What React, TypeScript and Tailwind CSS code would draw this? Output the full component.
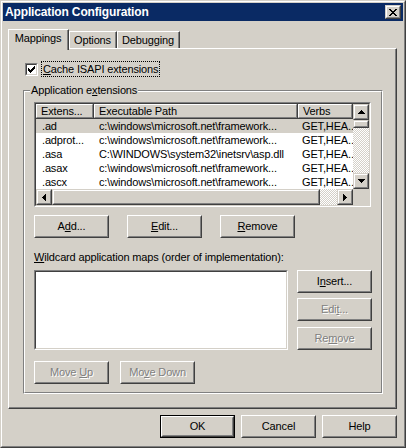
import React from "react";

type BoxProps = { children?: React.ReactNode; className?: string };

// classic raised 3d edge; `face` = scrollbar/caption style (outer light edge is the face colour)
function Bevel({ children, className = "", face = false }: BoxProps & { face?: boolean }) {
  return (
    <div
      className={`border ${
        face ? "border-t-[#d4d0c8] border-l-[#d4d0c8]" : "border-t-white border-l-white"
      } border-r-[#404040] border-b-[#404040] bg-[#d4d0c8] ${className}`}
    >
      <div
        className={`flex h-full w-full items-center justify-center border ${
          face ? "border-t-white border-l-white" : "border-t-[#d4d0c8] border-l-[#d4d0c8]"
        } border-r-[#808080] border-b-[#808080]`}
      >
        {children}
      </div>
    </div>
  );
}

function Sunken({ children, className = "" }: BoxProps) {
  return (
    <div className={`border border-t-[#808080] border-l-[#808080] border-r-white border-b-white ${className}`}>
      <div className="h-full w-full overflow-hidden border border-t-[#404040] border-l-[#404040] border-r-[#d4d0c8] border-b-[#d4d0c8] bg-white">
        {children}
      </div>
    </div>
  );
}

function Button({
  children,
  disabled = false,
  primary = false,
}: {
  children: React.ReactNode;
  disabled?: boolean;
  primary?: boolean;
}) {
  const text = disabled ? "text-[#808080] [text-shadow:1px_1px_0_#ffffff]" : "text-black";
  if (primary) {
    return (
      <div className="h-[23px] w-[75px] border border-black">
        <Bevel className="h-full w-full">
          <span className={text}>{children}</span>
        </Bevel>
      </div>
    );
  }
  return (
    <Bevel className="h-[23px] w-[75px]">
      <span className={text}>{children}</span>
    </Bevel>
  );
}

const ARROWS = {
  up: { w: 7, h: 4, d: "M3 0h1v1h1v1h1v1h1v1H0V3h1V2h1V1h1z" },
  down: { w: 7, h: 4, d: "M0 0h7v1H6v1H5v1H4v1H3V3H2V2H1V1H0z" },
  left: { w: 4, h: 7, d: "M4 0v7H3V6H2V5H1V4H0V3h1V2h1V1h1V0z" },
  right: { w: 4, h: 7, d: "M0 0h1v1h1v1h1v1h1v1H3v1H2v1H1v1H0z" },
};

function ArrowButton({ dir }: { dir: keyof typeof ARROWS }) {
  const a = ARROWS[dir];
  return (
    <Bevel face className="h-[16px] w-[16px] shrink-0">
      <svg width={a.w} height={a.h} viewBox={`0 0 ${a.w} ${a.h}`} shapeRendering="crispEdges">
        <path d={a.d} fill="#000" />
      </svg>
    </Bevel>
  );
}

const TRACK =
  "bg-[image:repeating-conic-gradient(#ffffff_0%_25%,#d4d0c8_0%_50%)] bg-size-[2px_2px] bg-[length:2px_2px]";

const ROWS = [
  { ext: ".ad", path: "c:\\windows\\microsoft.net\\framework...", selected: true },
  { ext: ".adprot...", path: "c:\\windows\\microsoft.net\\framework...", selected: false },
  { ext: ".asa", path: "C:\\WINDOWS\\system32\\inetsrv\\asp.dll", selected: false },
  { ext: ".asax", path: "c:\\windows\\microsoft.net\\framework...", selected: false },
  { ext: ".ascx", path: "c:\\windows\\microsoft.net\\framework...", selected: false },
];

function HeaderCell({ label, width }: { label: string; width: string }) {
  return (
    <div className={`h-full shrink-0 border-r border-b border-r-[#404040] border-b-[#404040] ${width}`}>
      <div className="flex h-full items-center overflow-hidden whitespace-nowrap border border-t-white border-l-white border-r-[#808080] border-b-[#808080] bg-[#d4d0c8] pl-[4px]">
        {label}
      </div>
    </div>
  );
}

function ExtensionList() {
  return (
    <Sunken className="h-[105px] w-[337px]">
      <div className="flex h-full">
        <div className="flex w-[317px] flex-col overflow-hidden">
          <div className="flex h-[15px]">
            <HeaderCell label="Extens..." width="w-[58px]" />
            <HeaderCell label="Executable Path" width="w-[204px]" />
            <HeaderCell label="Verbs" width="w-[55px]" />
          </div>
          {ROWS.map((r) => (
            <div
              key={r.ext}
              className={`flex h-[14px] items-center whitespace-nowrap ${r.selected ? "bg-[#d4d0c8]" : ""}`}
            >
              <div className="w-[58px] shrink-0 overflow-hidden pl-[6px]">{r.ext}</div>
              <div className="w-[204px] shrink-0 overflow-hidden pl-[5px]">{r.path}</div>
              <div className="w-[55px] shrink-0 pl-[4px]">GET,HEA..</div>
            </div>
          ))}
          <div className="mt-auto flex h-[16px]">
            <ArrowButton dir="left" />
            <Bevel face className="h-[16px] w-[268px]" />
            <div className={`h-[16px] flex-1 ${TRACK}`} />
            <ArrowButton dir="right" />
          </div>
        </div>
        <div className="flex w-[16px] flex-col">
          <ArrowButton dir="up" />
          <Bevel face className="h-[8px] w-[16px]" />
          <div className={`flex-1 ${TRACK}`} />
          <ArrowButton dir="down" />
          <div className="h-[16px] bg-[#d4d0c8]" />
        </div>
      </div>
    </Sunken>
  );
}

export default function App() {
  return (
    <div className="h-[448px] w-[406px] border border-t-[#d4d0c8] border-l-[#d4d0c8] border-r-[#404040] border-b-[#404040] bg-[#d4d0c8] font-['Liberation_Sans',Arial,sans-serif] text-[11px] leading-[13px] tracking-[-0.15px] text-black">
      <div className="h-full border border-t-white border-l-white border-r-[#808080] border-b-[#808080] p-px">
        {/* caption */}
        <div className="flex h-[18px] items-center justify-between bg-[#0a2a64] pl-[2px] pr-[2px]">
          <span className="text-[12px] font-bold text-white">Application Configuration</span>
          <Bevel face className="h-[14px] w-[16px]">
            <svg width="8" height="7" viewBox="0 0 8 7" shapeRendering="crispEdges">
              <path
                d="M0 0h2v1H0zM6 0h2v1H6zM1 1h2v1H1zM5 1h2v1H5zM2 2h4v1H2zM3 3h2v1H3zM2 4h4v1H2zM1 5h2v1H1zM5 5h2v1H5zM0 6h2v1H0zM6 6h2v1H6z"
                fill="#000"
              />
            </svg>
          </Bevel>
        </div>

        <div className="ml-[5px] mt-[8px] w-[389px]">
          {/* tabs */}
          <div className="relative z-10 flex h-[19px] items-end">
            <div className="-mb-[2px] h-[21px] w-[61px] border-t border-l border-r border-t-white border-l-white border-r-[#404040] bg-[#d4d0c8]">
              <div className="flex h-full justify-center border-r border-r-[#808080] pt-[2px]">Mappings</div>
            </div>
            <div className="h-[17px] w-[48px] border-t border-l border-r border-t-white border-l-white border-r-[#404040]">
              <div className="flex h-full justify-center border-r border-r-[#808080] pt-[2px]">Options</div>
            </div>
            <div className="h-[17px] w-[63px] border-t border-l border-r border-t-white border-l-white border-r-[#404040]">
              <div className="flex h-full justify-center border-r border-r-[#808080] pt-[2px]">Debugging</div>
            </div>
          </div>

          {/* tab page */}
          <div className="h-[361px] border border-t-white border-l-white border-r-[#404040] border-b-[#404040]">
            <div className="h-full border-r border-b border-r-[#808080] border-b-[#808080] pt-[12px]">
              <div className="ml-[16px] flex h-[16px] items-center">
                <div className="h-[13px] w-[13px] border border-t-[#808080] border-l-[#808080] border-r-white border-b-white">
                  <div className="flex h-full w-full items-center justify-center border border-t-[#404040] border-l-[#404040] border-r-[#d4d0c8] border-b-[#d4d0c8] bg-white">
                    <svg width="7" height="7" viewBox="0 0 7 7" shapeRendering="crispEdges">
                      <path
                        d="M6 0h1v1H6zM5 1h2v1H5zM0 2h1v1H0zM4 2h3v1H4zM0 3h2v1H0zM3 3h3v1H3zM0 4h5v1H0zM1 5h3v1H1zM2 6h1v1H2z"
                        fill="#000"
                      />
                    </svg>
                  </div>
                </div>
                <div className="ml-[3px] flex h-[16px] items-center border border-dotted border-black px-[1px]">
                  <span>
                    <u>C</u>ache ISAPI extensions
                  </span>
                </div>
              </div>

              {/* group box */}
              <div className="relative ml-[14px] mt-[13px] h-[304px] w-[360px] border border-t-[#808080] border-l-[#808080] border-r-white border-b-white">
                <span className="absolute left-[6px] top-[-7px] bg-[#d4d0c8] px-[1px]">
                  Application e<u>x</u>tensions
                </span>
                <div className="h-full border border-t-white border-l-white border-r-[#808080] border-b-[#808080] pl-[9px] pt-[10px]">
                  <ExtensionList />

                  <div className="mt-[8px] flex gap-[18px]">
                    <Button>
                      A<u>d</u>d...
                    </Button>
                    <Button>
                      <u>E</u>dit...
                    </Button>
                    <Button>
                      <u>R</u>emove
                    </Button>
                  </div>

                  <div className="mt-[13px]">
                    <u>W</u>ildcard application maps (order of implementation):
                  </div>

                  <div className="mt-[6px] flex gap-[9px]">
                    <Sunken className="h-[80px] w-[254px]" />
                    <div className="flex flex-col">
                      <Button>
                        I<u>n</u>sert...
                      </Button>
                      <div className="mt-[5px]">
                        <Button disabled>
                          Edi<u>t</u>...
                        </Button>
                      </div>
                      <div className="mt-[6px]">
                        <Button disabled>
                          Re<u>m</u>ove
                        </Button>
                      </div>
                    </div>
                  </div>

                  <div className="mt-[11px] flex gap-[11px]">
                    <Button disabled>
                      Move <u>U</u>p
                    </Button>
                    <Button disabled>
                      Mo<u>v</u>e Down
                    </Button>
                  </div>
                </div>
              </div>
            </div>
          </div>
        </div>

        {/* dialog buttons */}
        <div className="mt-[6px] flex justify-end gap-[6px] pr-[6px]">
          <Button primary>OK</Button>
          <Button>Cancel</Button>
          <Button>Help</Button>
        </div>
      </div>
    </div>
  );
}
